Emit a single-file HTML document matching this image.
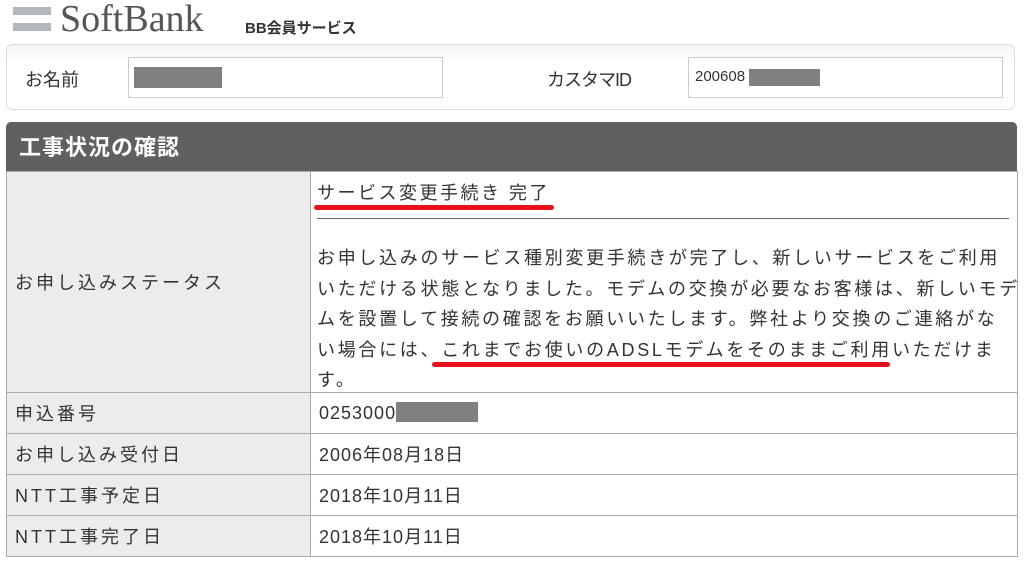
<!DOCTYPE html>
<html><head><meta charset="utf-8"><style>
body{margin:0;background:#fff;font-family:"Liberation Sans","Noto Sans CJK JP",sans-serif;color:#222;width:1025px;height:567px;overflow:hidden;position:relative}
.a{position:absolute}
.bar{background:#b5b8bb;height:8px;width:38px;left:13px}
.panel{left:6px;top:44px;width:1009px;height:66px;border:1px solid #ddd;border-radius:6px;background:linear-gradient(#f4f4f4,#fff 30%,#fff);box-sizing:border-box}
.inp{border:1px solid #ccc;background:#fff;box-sizing:border-box;height:41px}
.red{background:#808080}
.hd{left:6px;top:122px;width:1011px;height:50px;background:#606060;border-radius:5px 5px 0 0;color:#fff;font-weight:bold;font-size:22px;line-height:52px;padding-left:13px;box-sizing:border-box;letter-spacing:1px}
table{position:absolute;left:6px;top:171px;width:1012px;border-collapse:collapse;font-size:18px;table-layout:fixed}
td{border:1px solid #aaa;padding:0 0 0 8px;color:#333;white-space:nowrap;overflow:hidden}
td.l{background:#ececec;letter-spacing:3px}
td.r{letter-spacing:1px}
.ul{position:absolute;height:5px;background:#e8101c;border-radius:3px}
</style></head><body>
<div class="a bar" style="top:7px"></div><div class="a bar" style="top:23px"></div>
<div class="a" style="left:60px;top:-3px;font-family:'Liberation Serif',serif;font-size:38px;color:#555">SoftBank</div>
<div class="a" style="left:245px;top:17px;font-size:15px;font-weight:bold;color:#333">BB会員サービス</div>
<div class="a panel"></div>
<div class="a" style="left:25px;top:66px;font-size:18px;color:#333">お名前</div>
<div class="a inp" style="left:128px;top:57px;width:315px"></div>
<div class="a red" style="left:134px;top:67px;width:88px;height:21px"></div>
<div class="a" style="left:547px;top:66px;font-size:18px;color:#333;letter-spacing:-1px">カスタマID</div>
<div class="a inp" style="left:688px;top:57px;width:315px"></div>
<div class="a" style="left:695px;top:68px;font-size:15px;color:#333">200608</div>
<div class="a red" style="left:749px;top:69px;width:71px;height:17px"></div>
<div class="a hd">工事状況の確認</div>
<table>
<colgroup><col style="width:304px"><col></colgroup>
<tr><td class="l" style="height:220px">お申し込みステータス</td><td style="vertical-align:top;padding:0"><div style="height:220px;overflow:hidden">
<div style="margin:6px 8px 0 6px;border-bottom:1px solid #666;height:40px;line-height:30px;letter-spacing:2.5px">サービス変更手続き 完了</div>
<div style="padding:24px 0 0 6px;line-height:30.5px;letter-spacing:2.7px">お申し込みのサービス種別変更手続きが完了し、新しいサービスをご利用<br>いただける状態となりました。モデムの交換が必要なお客様は、新しいモデ<br>ムを設置して接続の確認をお願いいたします。弊社より交換のご連絡がな<br>い場合には、これまでお使いのADSLモデムをそのままご利用いただけま<br>す。</div>
</div></td></tr>
<tr><td class="l" style="height:40px">申込番号</td><td class="r">0253000<span style="display:inline-block;width:82px;height:20px;background:#808080;vertical-align:-3px"></span></td></tr>
<tr><td class="l" style="height:40px">お申し込み受付日</td><td class="r">2006年08月18日</td></tr>
<tr><td class="l" style="height:40px">NTT工事予定日</td><td class="r">2018年10月11日</td></tr>
<tr><td class="l" style="height:40px">NTT工事完了日</td><td class="r">2018年10月11日</td></tr>
</table>
<div class="ul" style="left:314px;top:205px;width:240px"></div>
<div class="ul" style="left:432px;top:362px;width:458px"></div>
</body></html>
